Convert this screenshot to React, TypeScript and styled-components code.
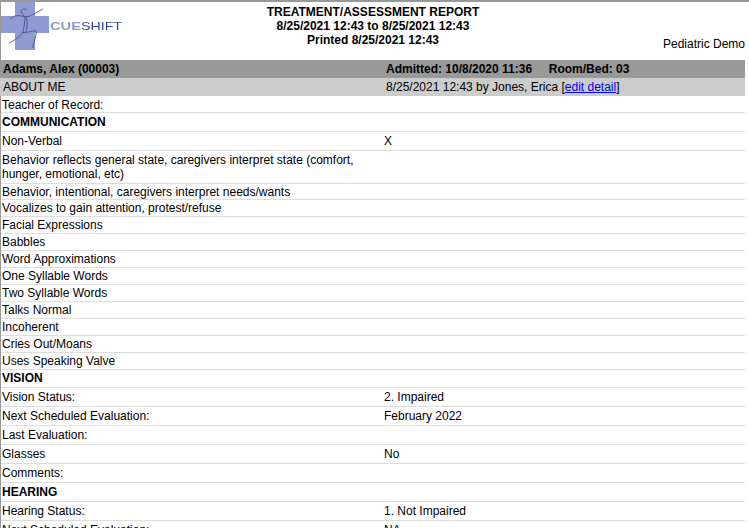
import React from "react";
import styled, { createGlobalStyle } from "styled-components";

const Global = createGlobalStyle`
  html, body { margin: 0; padding: 0; background: #fff; overflow: hidden; }
  body { font-family: "Liberation Sans", Arial, sans-serif; font-size: 12px; color: #000; }
`;

const Page = styled.div`
  width: 749px;
  height: 528px;
  overflow: hidden;
  border-top: 2px solid #999;
  box-sizing: border-box;
`;

const Sheet = styled.div`
  width: 745px;
  border-left: 1px solid #999;
  box-sizing: border-box;
`;

const Header = styled.header`
  display: grid;
  grid-template-columns: 122px 1fr 122px;
  height: 58px;
`;

const LogoBox = styled.div`
  display: flex;
  align-items: flex-start;
`;

const LogoArt = styled.svg`
  filter: blur(0.3px);
`;

const Titles = styled.div`
  padding-top: 3px;
  text-align: center;
  font-weight: bold;
  line-height: 14px;
`;

const Site = styled.div`
  align-self: end;
  text-align: right;
  padding-bottom: 9px;
`;

const Band = styled.div<{ $tone: "dark" | "light" }>`
  display: grid;
  grid-template-columns: 383px 1fr;
  height: 18px;
  line-height: 18px;
  padding-left: 3px;
  margin-left: -1px;
  background: ${(p) => (p.$tone === "dark" ? "#999" : "#ccc")};
  font-weight: ${(p) => (p.$tone === "dark" ? "bold" : "normal")};
`;

const Link = styled.a`
  color: #00e;
  text-decoration: underline;
`;

const Row = styled.div<{ $height: number; $nudge?: number }>`
  display: grid;
  grid-template-columns: 382px 1fr;
  height: ${(p) => p.$height}px;
  box-sizing: border-box;
  border-bottom: 1px solid #ddd;
  padding-left: 1px;
  padding-top: ${(p) => p.$nudge ?? 0}px;
  line-height: 14px;
  align-items: ${(p) => (p.$nudge === undefined ? "center" : "start")};
`;

const Label = styled.div<{ $strong?: boolean }>`
  max-width: 362px;
  font-weight: ${(p) => (p.$strong ? "bold" : "normal")};
`;

const Value = styled.div``;

const BrandText = styled.text`
  font-family: "Liberation Sans", Arial, sans-serif;
  font-size: 10.5px;
`;

const Logo = () => (
  <LogoArt width="122" height="50" viewBox="0 0 122 50" aria-label="CueShift">
    <path d="M14 0H34V14H48V31H34V48H14V31H0V14H14Z" fill="#8f9bd1" />
    <g fill="none" stroke="#3c4590" strokeWidth="0.8">
      <path d="M42 7 L29 14 C26 15 24 15 20 14 C16 13 12 14 9 17" />
      <path d="M26 8 C24 6 21 7 20 9 C20 12 23 13 24 15 C24 20 23 25 22 30 C20 34 14 38 8 41" />
      <path d="M21 30 C25 32 31 28 35 29 C36 34 32 40 32 46" />
      <path d="M25 15 C27 20 26 26 25 30" />
    </g>
    <BrandText x="49" y="27.5" fontWeight="bold" fill="#8f9bd1" textLength="31" lengthAdjust="spacingAndGlyphs">CUE</BrandText>
    <BrandText x="80" y="27.5" fill="#3c4590" textLength="41" lengthAdjust="spacingAndGlyphs">SHIFT</BrandText>
  </LogoArt>
);

type Item = { label: string; value?: string; strong?: boolean; height: number; nudge?: number };

const rows: Item[] = [
  { label: "Teacher of Record:", height: 17, nudge: 2 },
  { label: "COMMUNICATION", strong: true, height: 19 },
  { label: "Non-Verbal", value: "X", height: 19 },
  { label: "Behavior reflects general state, caregivers interpret state (comfort, hunger, emotional, etc)", height: 33 },
  { label: "Behavior, intentional, caregivers interpret needs/wants", height: 16 },
  { label: "Vocalizes to gain attention, protest/refuse", height: 17 },
  { label: "Facial Expressions", height: 17 },
  { label: "Babbles", height: 17 },
  { label: "Word Approximations", height: 17 },
  { label: "One Syllable Words", height: 17 },
  { label: "Two Syllable Words", height: 17 },
  { label: "Talks Normal", height: 17 },
  { label: "Incoherent", height: 17 },
  { label: "Cries Out/Moans", height: 17 },
  { label: "Uses Speaking Valve", height: 17 },
  { label: "VISION", strong: true, height: 18, nudge: 1 },
  { label: "Vision Status:", value: "2. Impaired", height: 19 },
  { label: "Next Scheduled Evaluation:", value: "February 2022", height: 19 },
  { label: "Last Evaluation:", height: 19 },
  { label: "Glasses", value: "No", height: 19 },
  { label: "Comments:", height: 19 },
  { label: "HEARING", strong: true, height: 19 },
  { label: "Hearing Status:", value: "1. Not Impaired", height: 19 },
  { label: "Next Scheduled Evaluation:", value: "NA", height: 19 },
];

export default function App() {
  return (
    <Page>
      <Global />
      <Sheet>
        <Header>
          <LogoBox>
            <Logo />
          </LogoBox>
          <Titles>
            <div>TREATMENT/ASSESSMENT REPORT</div>
            <div>8/25/2021 12:43 to 8/25/2021 12:43</div>
            <div>Printed 8/25/2021 12:43</div>
          </Titles>
          <Site>Pediatric Demo</Site>
        </Header>
        <Band $tone="dark">
          <div>Adams, Alex (00003)</div>
          <div>Admitted: 10/8/2020 11:36 &nbsp;&nbsp;&nbsp; Room/Bed: 03</div>
        </Band>
        <Band $tone="light">
          <div>ABOUT ME</div>
          <div>
            8/25/2021 12:43 by Jones, Erica [<Link href="#">edit detail</Link>]
          </div>
        </Band>
        {rows.map((r, i) => (
          <Row key={i} $height={r.height} $nudge={r.nudge}>
            <Label $strong={r.strong}>{r.label}</Label>
            <Value>{r.value}</Value>
          </Row>
        ))}
      </Sheet>
    </Page>
  );
}
